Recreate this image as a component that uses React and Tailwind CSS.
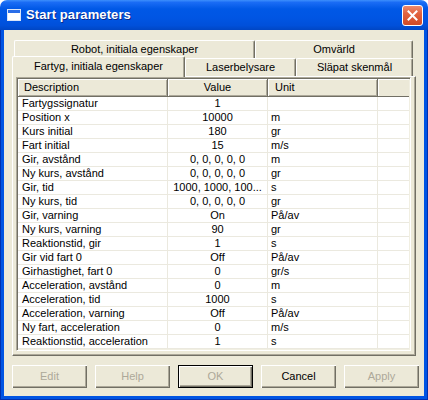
import React from "react";

const rows = [
  ["Fartygssignatur", "1", ""],
  ["Position x", "10000", "m"],
  ["Kurs initial", "180", "gr"],
  ["Fart initial", "15", "m/s"],
  ["Gir, avstånd", "0, 0, 0, 0, 0", "m"],
  ["Ny kurs, avstånd", "0, 0, 0, 0, 0", "gr"],
  ["Gir, tid", "1000, 1000, 100...", "s"],
  ["Ny kurs, tid", "0, 0, 0, 0, 0", "gr"],
  ["Gir, varning", "On", "På/av"],
  ["Ny kurs, varning", "90", "gr"],
  ["Reaktionstid, gir", "1", "s"],
  ["Gir vid fart 0", "Off", "På/av"],
  ["Girhastighet, fart 0", "0", "gr/s"],
  ["Acceleration, avstånd", "0", "m"],
  ["Acceleration, tid", "1000", "s"],
  ["Acceleration, varning", "Off", "På/av"],
  ["Ny fart, acceleration", "0", "m/s"],
  ["Reaktionstid, acceleration", "1", "s"],
];

function Tab({ w, h, children, selected }) {
  return (
    <div
      className={
        "flex items-center justify-center border-t border-l border-r border-t-white border-l-white border-r-[#716f64] shadow-[inset_-1px_0_0_#aca899] rounded-tl-[2px] rounded-tr-[2px] bg-[#ece9d8] leading-none " +
        (selected ? "relative z-10 -mb-[1px] pb-[2px]" : "")
      }
      style={{ width: w, height: h }}
    >
      {children}
    </div>
  );
}

function Btn({ children, disabled, def }) {
  return (
    <div
      className={
        "w-[75px] h-[23px] flex items-center justify-center bg-[#ece9d8] " +
        (def
          ? "border border-black shadow-[inset_1px_1px_0_#fff,inset_-1px_-1px_0_#716f64,inset_-2px_-2px_0_#aca899] "
          : "shadow-[inset_1px_1px_0_#fff,inset_-1px_-1px_0_#716f64,inset_-2px_-2px_0_#aca899] ") +
        (disabled ? "text-[#aca899]" : "text-black")
      }
    >
      {children}
    </div>
  );
}

export default function App() {
  return (
    <div className="w-[428px] h-[400px] flex flex-col font-['Liberation_Sans',Arial,sans-serif] text-[11px] text-black bg-white">
      {/* Title bar */}
      <div className="h-[30px] shrink-0 rounded-t-[7px] bg-[linear-gradient(to_bottom,#3d8ffc_0%,#1a6cf5_8%,#0058e6_30%,#0055e3_60%,#0050da_85%,#0046c4_100%)] flex items-center pl-[7px] pr-[5px]">
        <svg width="14" height="12" viewBox="0 0 14 12" className="shrink-0">
          <rect x="0.5" y="0.5" width="13" height="11" fill="#ffffff" stroke="#d8e4f8" />
          <rect x="1" y="1" width="12" height="3" fill="#2a6ee8" />
        </svg>
        <span className="ml-[5px] text-white font-bold text-[13px] [text-shadow:1px_1px_0_#0a2a8a] tracking-[0.1px]">
          Start parameters
        </span>
        <div className="ml-auto w-[21px] h-[21px] rounded-[3px] border border-white bg-[linear-gradient(to_bottom,#ec8a6e_0%,#e2633f_40%,#d24a26_100%)] flex items-center justify-center">
          <svg width="11" height="11" viewBox="0 0 11 11">
            <path d="M1.5 1.5 L9.5 9.5 M9.5 1.5 L1.5 9.5" stroke="#ffffff" strokeWidth="2" strokeLinecap="square" />
          </svg>
        </div>
      </div>

      {/* Frame */}
      <div className="flex-1 flex bg-[#0054e3] px-[4px] pb-[4px] shadow-[inset_1px_0_0_#0030b0,inset_-1px_0_0_#0030b0,inset_0_-1px_0_#0030b0]">
        <div className="flex-1 bg-[#ece9d8] flex flex-col pl-[8px] pt-[10px]">
          {/* Tab row 1 */}
          <div className="flex h-[18px] ml-[2px]">
            <Tab w={241} h={18}>Robot, initiala egenskaper</Tab>
            <Tab w={158} h={18}>Omvärld</Tab>
          </div>
          {/* Tab row 2 */}
          <div className="flex h-[18px] items-end">
            <Tab w={173} h={21} selected>Fartyg, initiala egenskaper</Tab>
            <Tab w={111} h={18}>Laserbelysare</Tab>
            <Tab w={117} h={18}>Släpat skenmål</Tab>
          </div>
          {/* Panel */}
          <div className="w-[404px] h-[280px] border border-t-white border-l-white border-r-[#716f64] border-b-[#716f64] shadow-[inset_-1px_-1px_0_#aca899] pl-[3px]">
            <div className="w-[395px] h-[274px] bg-white border border-t-[#aca899] border-l-[#aca899] border-r-white border-b-white p-[1px] shadow-[inset_1px_1px_0_#716f64,inset_-1px_-1px_0_#f1efe2]">
              <div className="flex flex-col bg-white h-full overflow-hidden">
                <div className="flex h-[18px] shrink-0">
                  <div className="w-[150px] pl-[6px] flex items-center bg-[#ece9d8] border-r border-b border-[#716f64] shadow-[inset_1px_1px_0_#fff,inset_-1px_-1px_0_#aca899]">Description</div>
                  <div className="w-[100px] flex items-center justify-center bg-[#ece9d8] border-r border-b border-[#716f64] shadow-[inset_1px_1px_0_#fff,inset_-1px_-1px_0_#aca899]">Value</div>
                  <div className="w-[110px] pl-[7px] flex items-center bg-[#ece9d8] border-r border-b border-[#716f64] shadow-[inset_1px_1px_0_#fff,inset_-1px_-1px_0_#aca899]">Unit</div>
                  <div className="flex-1 bg-[#ece9d8] border-b border-[#716f64] shadow-[inset_1px_1px_0_#fff]"></div>
                </div>
                {rows.map((r, i) => (
                  <div key={i} className="flex h-[14px] shrink-0 leading-[13px]">
                    <div className="w-[150px] pl-[4px] border-r border-b border-[#ebe9df] whitespace-nowrap overflow-hidden">{r[0]}</div>
                    <div className="w-[100px] text-center border-r border-b border-[#ebe9df] whitespace-nowrap overflow-hidden">{r[1]}</div>
                    <div className="w-[110px] pl-[3px] border-r border-b border-[#ebe9df] whitespace-nowrap">{r[2]}</div>
                    <div className="flex-1 border-b border-[#ebe9df]"></div>
                  </div>
                ))}
              </div>
            </div>
          </div>
          {/* Buttons */}
          <div className="flex gap-[8px] mt-[9px]">
            <Btn disabled>Edit</Btn>
            <Btn disabled>Help</Btn>
            <Btn disabled def>OK</Btn>
            <Btn>Cancel</Btn>
            <Btn disabled>Apply</Btn>
          </div>
        </div>
      </div>
    </div>
  );
}
